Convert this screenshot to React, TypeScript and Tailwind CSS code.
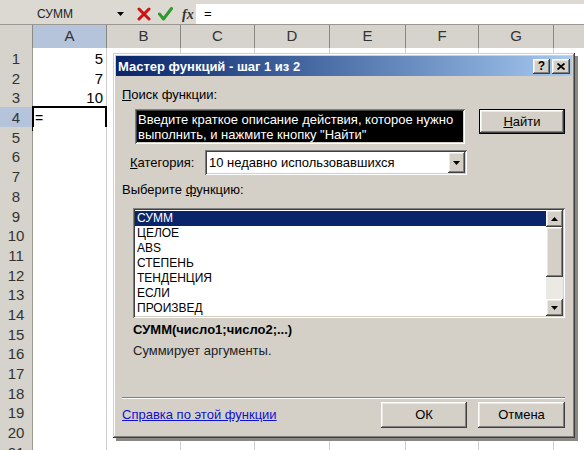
import React from "react";

const raised =
  "bg-[#d4d0c8] shadow-[inset_-1px_-1px_0_#404040,inset_1px_1px_0_#ffffff,inset_-2px_-2px_0_#808080,inset_2px_2px_0_#ece9e4]";
const sunken =
  "shadow-[inset_1px_1px_0_#808080,inset_-1px_-1px_0_#ffffff,inset_2px_2px_0_#404040,inset_-2px_-2px_0_#d4d0c8]";

const rows = Array.from({ length: 21 }, (_, i) => i + 1);
const cols = ["A", "B", "C", "D", "E", "F", "G", ""];
const values: Record<number, string> = { 1: "5", 2: "7", 3: "10" };
const funcs = ["СУММ", "ЦЕЛОЕ", "ABS", "СТЕПЕНЬ", "ТЕНДЕНЦИЯ", "ЕСЛИ", "ПРОИЗВЕД"];

function Arrow({ up }: { up?: boolean }) {
  return (
    <svg width="7" height="4" viewBox="0 0 7 4">
      <polygon points={up ? "0,4 7,4 3.5,0" : "0,0 7,0 3.5,4"} fill="#000" />
    </svg>
  );
}

function FormulaBar() {
  return (
    <div className="h-[25px] bg-[#dcd9d2] pt-[4px] flex border-b border-[#9a9890]">
      <div className="w-[196px] flex items-center text-[12px] text-[#222]">
        <span className="ml-[37px] w-[80px]">СУММ</span>
        <Arrow />
        <svg width="14" height="14" viewBox="0 0 14 14" className="ml-[13px]">
          <path d="M2 2 L12 12 M12 2 L2 12" stroke="#d01010" strokeWidth="3" strokeLinecap="round" />
        </svg>
        <svg width="15" height="14" viewBox="0 0 15 14" className="ml-[7px]">
          <path d="M1.5 7 L5.5 12 L13.5 1.5" stroke="#2f9a2a" strokeWidth="3" fill="none" strokeLinecap="round" strokeLinejoin="round" />
        </svg>
        <span className="ml-[9px] font-['Liberation_Serif',serif] italic font-bold text-[14px] text-[#333]">
          fx
        </span>
      </div>
      <div className="flex-1 bg-white flex items-center pl-[8px] text-[13px]">=</div>
    </div>
  );
}

function Sheet() {
  const grid = "grid grid-cols-[33px_74px_74px_74px_75px_76px_73px_75px_74px] w-[628px]";
  return (
    <div className="font-['Liberation_Sans',Arial,sans-serif] text-[15px] text-black">
      <div className={`${grid} h-[23px] bg-[#d6d3cc]`}>
        <div className="border-r border-b border-[#8a8882]" />
        {cols.map((c, i) => (
          <div
            key={i}
            className={`flex items-center justify-center border-r border-b border-[#8a8882] text-[#333] ${
              c === "A" ? "bg-[#b5c3db]" : ""
            }`}
          >
            {c}
          </div>
        ))}
      </div>
      {rows.map((r) => (
        <div key={r} className={`${grid} h-[19.7px]`}>
          <div
            className={`flex items-center justify-center border-r border-b border-[#9c9a94] text-[#333] ${
              r === 4 ? "bg-[#b5c3db]" : "bg-[#d6d3cc]"
            }`}
          >
            {r}
          </div>
          {cols.map((c, i) => (
            <div
              key={i}
              className={`relative flex items-center border-r border-b border-[#cfcfcf] bg-white ${
                c === "A" && values[r] ? "justify-end pr-[3px]" : "pl-[2px]"
              }`}
            >
              {c === "A" ? values[r] : ""}
              {c === "A" && r === 4 && (
                <>
                  <span className="text-[14px]">=</span>
                  <div className="absolute -left-[1px] -top-[1px] -right-[1px] -bottom-[1px] border-2 border-black" />
                  <div className="absolute -right-[3px] -bottom-[3px] w-[5px] h-[5px] bg-black border border-white" />
                </>
              )}
            </div>
          ))}
        </div>
      ))}
    </div>
  );
}

function Dialog() {
  return (
    <div
      className={`absolute left-[113px] top-[53px] w-[462px] h-[385px] p-[3px] flex flex-col font-['Liberation_Sans',Arial,sans-serif] text-[13px] text-black bg-[#d4d0c8] shadow-[inset_-1px_-1px_0_#404040,inset_1px_1px_0_#d4d0c8,inset_-2px_-2px_0_#808080,inset_2px_2px_0_#ffffff,3px_3px_0_#8a8882]`}
    >
      <div className="h-[20px] flex items-center justify-between bg-gradient-to-r from-[#0a246a] to-[#a6caf0] pl-[2px] pr-[2px]">
        <span className="text-white font-bold text-[13px] leading-none">Мастер функций - шаг 1 из 2</span>
        <div className="flex gap-[2px]">
          <div className={`${raised} w-[17px] h-[15px] flex items-center justify-center font-bold text-[12px] leading-none`}>
            ?
          </div>
          <div className={`${raised} w-[18px] h-[15px] flex items-center justify-center`}>
            <svg width="8" height="7" viewBox="0 0 8 7">
              <path d="M0.5 0.5 L7.5 6.5 M7.5 0.5 L0.5 6.5" stroke="#000" strokeWidth="1.8" />
            </svg>
          </div>
        </div>
      </div>

      <div className="flex-1 flex flex-col pl-[6px] pr-[7px]">
        <div className="mt-[11px] leading-[16px]">
          <span className="underline">П</span>оиск функции:
        </div>

        <div className="mt-[6px] flex">
          <div className={`ml-[13px] w-[330px] h-[35px] bg-black text-white leading-[15px] pl-[3px] pt-[3px] ${sunken}`}>
            Введите краткое описание действия, которое нужно
            <br />
            выполнить, и нажмите кнопку "Найти"
          </div>
          <div className="ml-auto w-[86px] h-[25px] border border-black">
            <div className={`${raised} w-full h-full flex items-center justify-center`}>
              <span>
                <span className="underline">Н</span>айти
              </span>
            </div>
          </div>
        </div>

        <div className="mt-[6px] flex items-center">
          <div className="w-[83px] pl-[8px]">
            <span className="underline">К</span>атегория:
          </div>
          <div className={`w-[262px] h-[25px] bg-white flex items-center p-[2px] ${sunken}`}>
            <span className="flex-1 pl-[2px]">10 недавно использовавшихся</span>
            <div className={`${raised} w-[17px] h-[21px] flex items-center justify-center`}>
              <Arrow />
            </div>
          </div>
        </div>

        <div className="mt-[7px] leading-[16px]">
          Выберите <span className="underline">ф</span>ункцию:
        </div>

        <div className={`mt-[10px] ml-[11px] w-[432px] h-[110px] bg-white p-[2px] flex ${sunken}`}>
          <div className="flex-1 pt-[1px] text-[12px]">
            {funcs.map((f, i) => (
              <div
                key={f}
                className={`h-[15px] leading-[15px] pl-[2px] ${i === 0 ? "bg-[#0a246a] text-white" : ""}`}
              >
                {f}
              </div>
            ))}
          </div>
          <div className="w-[17px] flex flex-col">
            <div className={`${raised} h-[17px] flex items-center justify-center`}>
              <Arrow up />
            </div>
            <div className={`${raised} h-[50px]`} />
            <div className="flex-1 bg-[#ebe9e4]" />
            <div className={`${raised} h-[17px] flex items-center justify-center`}>
              <Arrow />
            </div>
          </div>
        </div>

        <div className="mt-[4px] ml-[11px] font-bold leading-[16px]">СУММ(число1;число2;...)</div>
        <div className="mt-[5px] ml-[11px] leading-[16px] text-[#222]">Суммирует аргументы.</div>

        <div className="mt-auto border-t border-[#808080]">
          <div className="border-t border-white pt-[3px] pb-[7px] flex items-center">
            <span className="text-[#1010d0] underline">Справка по этой функции</span>
            <div className="ml-auto flex gap-[11px]">
              <div className={`${raised} w-[86px] h-[26px] flex items-center justify-center`}>ОК</div>
              <div className={`${raised} w-[87px] h-[26px] flex items-center justify-center`}>Отмена</div>
            </div>
          </div>
        </div>
      </div>
    </div>
  );
}

export default function App() {
  return (
    <div className="relative w-[584px] h-[450px] overflow-hidden bg-white font-['Liberation_Sans',Arial,sans-serif]">
      <FormulaBar />
      <Sheet />
      <Dialog />
    </div>
  );
}
